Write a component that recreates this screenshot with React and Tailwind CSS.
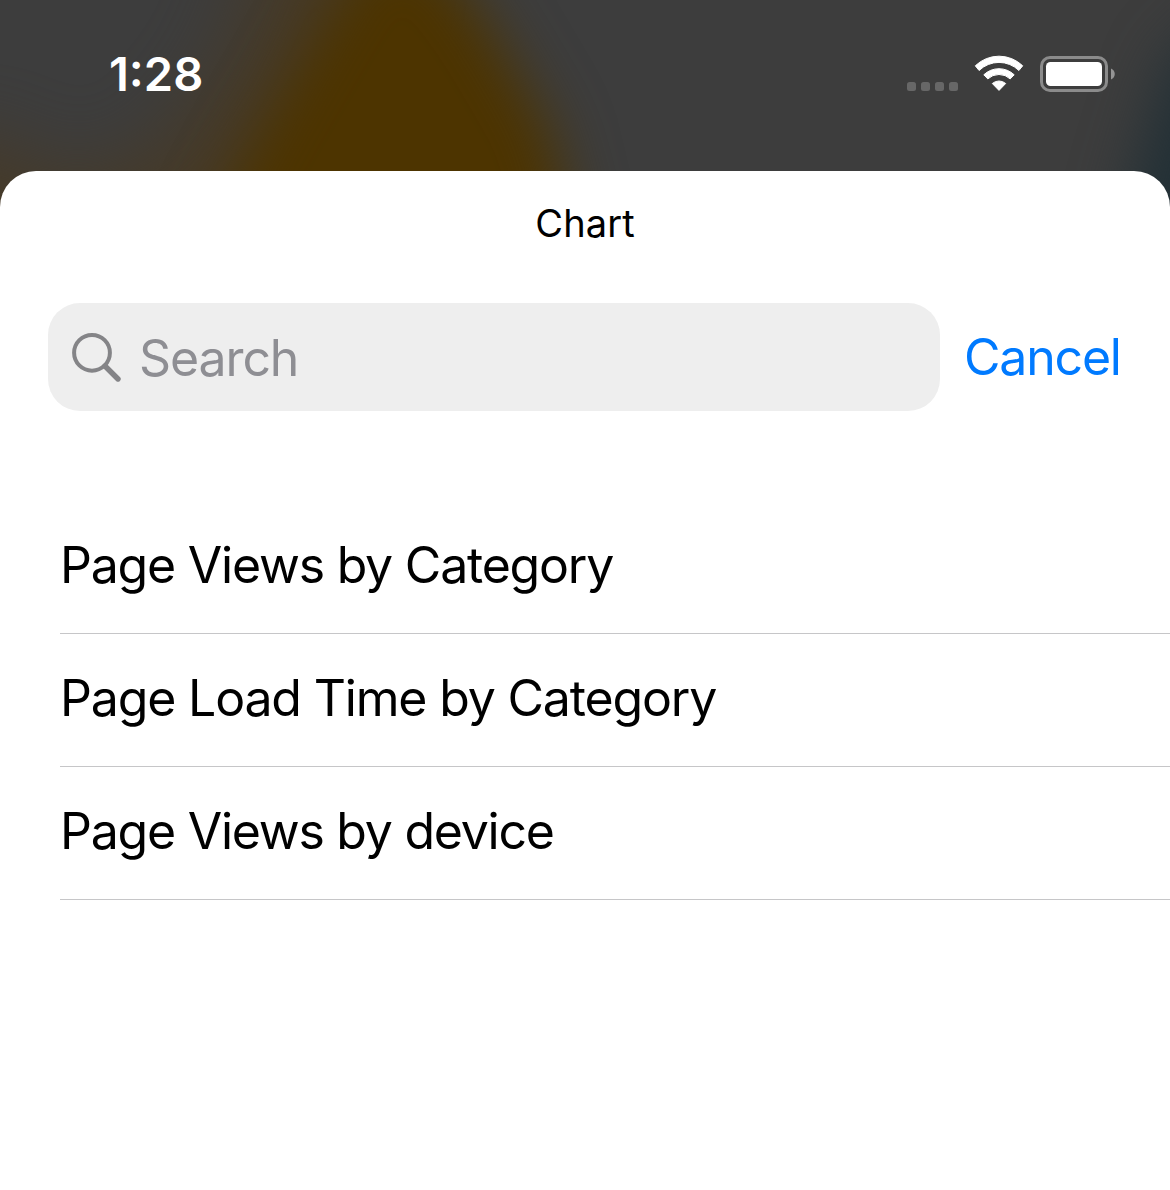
const charts = [
  { name: 'Page Views by Category', tracking: 'tracking-[-1.22px]' },
  { name: 'Page Load Time by Category', tracking: 'tracking-[-1.17px]' },
  { name: 'Page Views by device', tracking: 'tracking-[-1.25px]' },
];

function Wallpaper() {
  return (
    <svg className="absolute inset-0 h-[220px] w-full" viewBox="0 0 1170 220" aria-hidden="true">
      <defs>
        <filter id="soft" x="-50%" y="-50%" width="200%" height="200%" colorInterpolationFilters="sRGB">
          <feGaussianBlur stdDeviation="28" />
        </filter>
        <filter id="wide" x="-80%" y="-80%" width="260%" height="260%" colorInterpolationFilters="sRGB">
          <feGaussianBlur stdDeviation="36" />
        </filter>
      </defs>
      <rect width="1170" height="220" fill="#3d3d3d" />
      <path d="M-100 140 L0 140 L60 180 L150 155 L225 60 L275 -80 L400 -80 L330 320 L-100 320Z" fill="#473a26" opacity="0.9" filter="url(#wide)" />
      <path d="M368 -50 L430 -50 L485 20 L550 130 L596 320 L160 320 L255 140 L325 20Z" fill="#4d3400" filter="url(#soft)" />
      <path d="M1240 0 L1170 60 L1130 190 L1105 320 L1300 320 L1300 0Z" fill="#223036" filter="url(#soft)" />
    </svg>
  );
}

function StatusBar() {
  return (
    <header className="relative flex h-[171px] items-start justify-between pt-[47px] pr-[54px] pl-[109px] text-white">
      <time className="-mt-px text-[47px] leading-[56px] font-semibold">1:28</time>
      <div className="flex items-start pt-[7px]">
        <div className="mt-[28px] mr-[16px] flex gap-[5px]">
          <span className="size-[9px] rounded-[2.5px] bg-[#676767]" />
          <span className="size-[9px] rounded-[2.5px] bg-[#676767]" />
          <span className="size-[9px] rounded-[2.5px] bg-[#676767]" />
          <span className="size-[9px] rounded-[2.5px] bg-[#676767]" />
        </div>
        <svg className="mr-[16px] h-[38px] w-[50px]" viewBox="0 0 50 38" fill="currentColor" stroke="currentColor" strokeLinejoin="round">
          <path d="M1.3 11.8 A34 34 0 0 1 48.7 11.8 L44.9 16.5 A28.5 28.5 0 0 0 5.1 16.5Z" />
          <path d="M9.8 20.8 A22 22 0 0 1 40.2 20.8 L36.2 24.9 A16.4 16.4 0 0 0 13.8 24.9Z" />
          <path d="M18.3 29.5 A10.2 10.2 0 0 1 31.7 29.5 L25 36.4Z" />
        </svg>
        <svg className="h-[40px] w-[76px]" viewBox="0 0 76 40" fill="none">
          <rect x="1.5" y="3.5" width="65" height="33" rx="8.5" stroke="#8b8b8b" strokeWidth="3" />
          <rect x="6" y="8" width="56" height="24" rx="4.5" fill="#fff" />
          <path d="M71 14.5 C76 16.5 76 23.5 71 25.5Z" fill="#949494" />
        </svg>
      </div>
    </header>
  );
}

function SearchField() {
  return (
    <div className="flex h-[108px] w-[892px] items-center rounded-[32px] bg-[#eeeeee] pl-[22px]">
      <svg className="h-[54px] w-[54px]" viewBox="0 0 54 54" fill="none" stroke="#848487">
        <circle cx="22" cy="22.8" r="17.9" strokeWidth="4" />
        <path d="M35 36 L48 49" strokeWidth="5.4" strokeLinecap="round" />
      </svg>
      <span className="ml-[15px] pt-[2px] text-[50px] leading-[60px] tracking-[-1.1px] text-[#8e8e93]">Search</span>
    </div>
  );
}

export default function App() {
  return (
    <div className="relative flex h-[1190px] w-[1170px] flex-col overflow-hidden bg-[#3d3d3d] font-['Inter',sans-serif]">
      <Wallpaper />
      <StatusBar />
      <main className="relative flex-1 rounded-t-[36px] bg-white text-black">
        <h1 className="pt-[28px] text-center text-[38px] leading-[48px] font-normal tracking-[0.1px]">Chart</h1>
        <div className="mt-[56px] flex items-center pl-[48px]">
          <SearchField />
          <button className="ml-[24px] text-[50px] leading-[60px] tracking-[-1.2px] text-[#007aff]">Cancel</button>
        </div>
        <ul className="mt-[90px] pl-[60px]">
          {charts.map((chart) => (
            <li key={chart.name} className="flex h-[133px] items-center border-b border-[#c6c6c8] pb-[4px]">
              <span className={`text-[50px] leading-[60px] ${chart.tracking}`}>{chart.name}</span>
            </li>
          ))}
        </ul>
      </main>
    </div>
  );
}
